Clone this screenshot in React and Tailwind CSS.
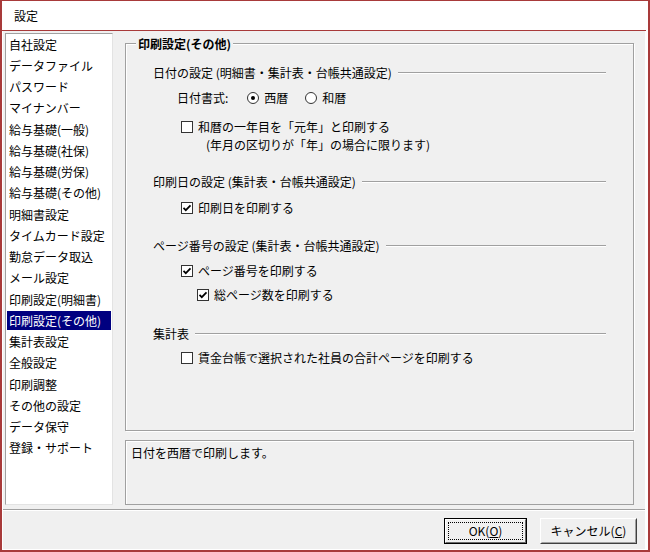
const menuItems = [
  "自社設定",
  "データファイル",
  "パスワード",
  "マイナンバー",
  "給与基礎(一般)",
  "給与基礎(社保)",
  "給与基礎(労保)",
  "給与基礎(その他)",
  "明細書設定",
  "タイムカード設定",
  "勤怠データ取込",
  "メール設定",
  "印刷設定(明細書)",
  "印刷設定(その他)",
  "集計表設定",
  "全般設定",
  "印刷調整",
  "その他の設定",
  "データ保守",
  "登録・サポート",
];

function CheckBox({ checked }) {
  return (
    <span className="w-[12px] h-[12px] border border-[#333] bg-white flex items-center justify-center shrink-0">
      {checked && (
        <svg width="10" height="10" viewBox="0 0 10 10">
          <path d="M1.5 4.8 L3.8 7.2 L8.5 2.3" fill="none" stroke="#000" strokeWidth="1.7" />
        </svg>
      )}
    </span>
  );
}

function Radio({ checked }) {
  return (
    <span className="w-[12px] h-[12px] rounded-full border border-[#333] bg-white flex items-center justify-center shrink-0">
      {checked && <span className="w-[4px] h-[4px] rounded-full bg-black" />}
    </span>
  );
}

function SectionHeader({ title, className = "" }) {
  return (
    <div className={`flex items-center h-[18px] pl-[27px] pr-[27px] ${className}`}>
      <span className="whitespace-nowrap">{title}</span>
      <div className="flex-1 ml-[6px] h-[2px] border-t border-[#a0a0a0] border-b border-b-white" />
    </div>
  );
}

function CheckRow({ checked, label, indent, className = "" }) {
  return (
    <div className={`flex items-center h-[18px] gap-[5px] ${indent} ${className}`}>
      <CheckBox checked={checked} />
      <span className="whitespace-nowrap">{label}</span>
    </div>
  );
}

export default function App() {
  return (
    <div className="w-[650px] h-[552px] bg-white border-x-2 border-t border-b-2 border-[#a83a3a] flex flex-col text-[12px] text-black font-['Noto_Sans_CJK_JP',sans-serif] leading-none overflow-hidden">
      {/* title bar */}
      <div className="h-[30px] shrink-0 border-b border-[#a83a3a] mr-[2px] flex items-center pl-[12px]">
        設定
      </div>

      {/* client */}
      <div className="flex-1 ml-px mr-[3px] mb-px bg-[#f0f0f0] flex flex-col">
        <div className="flex pt-[2px] pl-[2px]">
          {/* menu list */}
          <div className="w-[108px] h-[472px] bg-white border border-t-[#a0a0a0] border-l-[#a0a0a0] border-r-[#e3e3e3] border-b-[#e3e3e3] px-px">
            {menuItems.map((item) => {
              const active = item === "印刷設定(その他)";
              return (
                <div key={item} className="h-[21.26px] flex items-center">
                  <div
                    className={`w-full h-[19px] flex items-center pl-[2px] whitespace-nowrap ${
                      active ? "bg-[#000080] text-white" : ""
                    }`}
                  >
                    {item}
                  </div>
                </div>
              );
            })}
          </div>

          {/* right column */}
          <div className="ml-[12px] w-[509px] flex flex-col">
            <div className="relative mt-[10px] h-[388px] border border-[#a0a0a0] shadow-[inset_1px_1px_0_#fff,1px_1px_0_#fff] flex flex-col pt-[20px]">
              <span className="absolute left-[10px] top-[-8px] px-[2px] bg-[#f0f0f0] font-bold h-[16px] flex items-center">
                印刷設定(その他)
              </span>

              <SectionHeader title="日付の設定 (明細書・集計表・台帳共通設定)" />

              <div className="flex items-center h-[18px] mt-[7px] pl-[51px]">
                <span>日付書式:</span>
                <span className="ml-[19px] flex items-center gap-[5px]">
                  <Radio checked />
                  <span>西暦</span>
                </span>
                <span className="ml-[17px] flex items-center gap-[5px]">
                  <Radio />
                  <span>和暦</span>
                </span>
              </div>

              <CheckRow label="和暦の一年目を「元年」と印刷する" indent="pl-[55px]" className="mt-[11px]" />
              <div className="h-[18px] flex items-center pl-[80px]">(年月の区切りが「年」の場合に限ります)</div>

              <SectionHeader title="印刷日の設定 (集計表・台帳共通設定)" className="mt-[19px]" />
              <CheckRow checked label="印刷日を印刷する" indent="pl-[55px]" className="mt-[8px]" />

              <SectionHeader title="ページ番号の設定 (集計表・台帳共通設定)" className="mt-[20px]" />
              <CheckRow checked label="ページ番号を印刷する" indent="pl-[55px]" className="mt-[7px]" />
              <CheckRow checked label="総ページ数を印刷する" indent="pl-[71px]" className="mt-[6px]" />

              <SectionHeader title="集計表" className="mt-[21px]" />
              <CheckRow label="賃金台帳で選択された社員の合計ページを印刷する" indent="pl-[55px]" className="mt-[6px]" />
            </div>

            {/* description */}
            <div className="mt-[9px] h-[65px] border border-[#a0a0a0] shadow-[inset_1px_1px_0_#fff] pl-[5px] pt-[6px]">
              日付を西暦で印刷します。
            </div>
          </div>
        </div>

        {/* separator */}
        <div className="mt-[4px] h-[2px] border-t border-[#a0a0a0] border-b border-b-white" />

        {/* buttons */}
        <div className="flex justify-end gap-[13px] mt-[7px] pr-[8px]">
          <button className="w-[83px] h-[26px] border border-black bg-[#f0f0f0] p-0">
            <div className="w-full h-full border border-t-white border-l-white border-r-[#696969] border-b-[#696969] p-[2px]">
              <div className="w-full h-full border border-dotted border-black flex items-center justify-center">
                OK(<span className="underline">O</span>)
              </div>
            </div>
          </button>
          <button className="w-[97px] h-[26px] bg-[#f0f0f0] border border-t-white border-l-white border-r-[#404040] border-b-[#404040] p-0">
            <div className="w-full h-full border border-t-[#f0f0f0] border-l-[#f0f0f0] border-r-[#a0a0a0] border-b-[#a0a0a0] flex items-center justify-center">
              キャンセル(<span className="underline">C</span>)
            </div>
          </button>
        </div>
      </div>
    </div>
  );
}
